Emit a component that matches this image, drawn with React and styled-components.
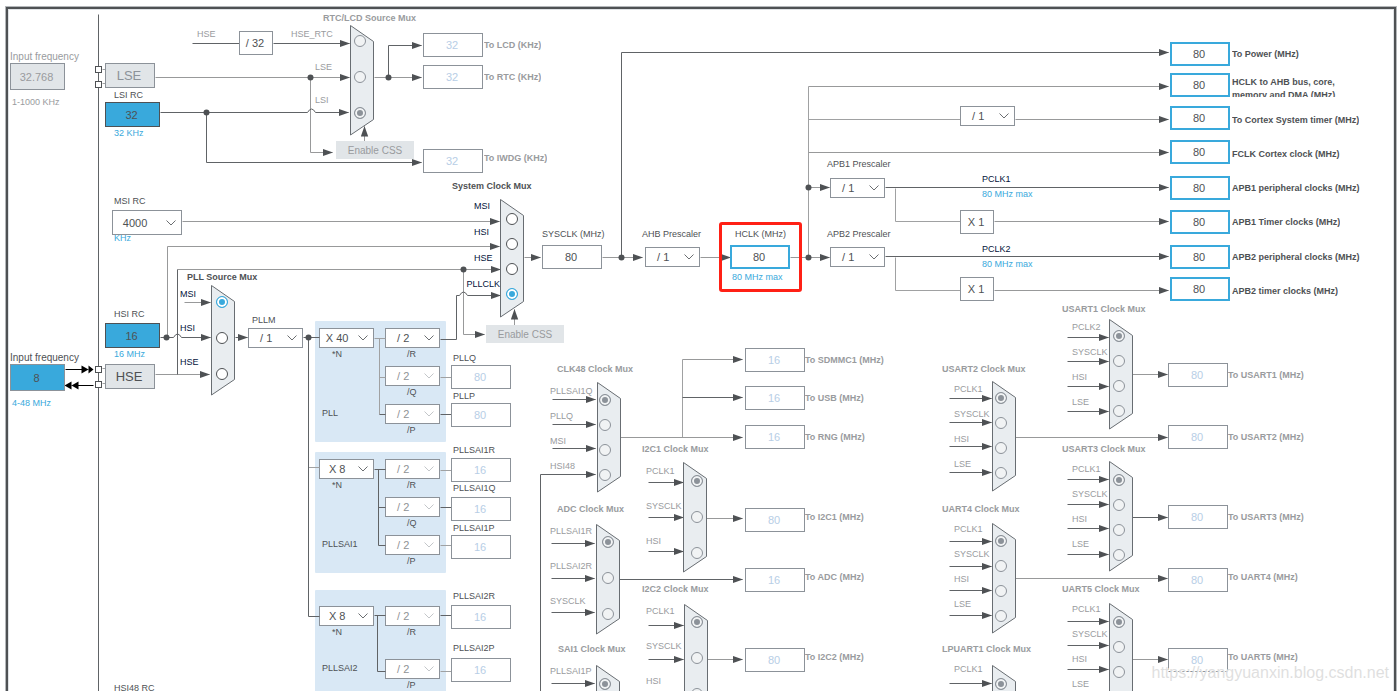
import React from 'react';
import styled, { createGlobalStyle } from 'styled-components';

const dark = '#4e5154';
const grey = '#999b9e';
const line = '#8c9299';
const blue = '#39a9dc';
const navy = '#03143a';
const pale = '#b7cee6';
const muxFill = '#e9edf0';

const GlobalStyle = createGlobalStyle`
  * {
    box-sizing: border-box;
  }
  body {
    margin: 0;
    background: white;
    font-family: "Liberation Sans", Arial, sans-serif;
  }
`;

const Page = styled.main`
  position: relative;
  height: 100vh;
  padding: 7px 3px 0 6px;
  overflow: hidden;
`;

const Frame = styled.div`
  height: 110vh;
  border: 2px solid ${dark};
  box-shadow: 0 0 0 1px #b4b7ba, inset 0 0 0 1px #dfe2e5;
`;

const Wires = styled.svg`
  position: absolute;
  top: 0;
  left: 0;
  width: 100%;
  height: 100%;
`;

// a block on the free canvas of the clock tree
const Node = styled.div`
  position: absolute;
  left: ${props => props.$x}px;
  top: ${props => props.$y}px;
  display: flex;
`;

const Text = styled.label`
  font-size: ${props => props.$size || 9}px;
  font-weight: ${props => props.$bold ? 'bold' : 'normal'};
  line-height: 13px;
  white-space: nowrap;
  color: ${props => props.$color || dark};
`;

const FieldNode = styled(Node)`
  flex-direction: column;
  align-items: flex-start;
`;

const FieldLabel = styled(Text)`
  margin: 0 0 ${props => props.$gap || 0}px ${props => props.$indent || 0}px;
`;

const FieldNote = styled(Text)`
  margin: ${props => props.$gap || 0}px 0 0 2px;
`;

const RcNote = styled(FieldNote)`
  margin-left: ${props => props.$indent}px;
`;

const SignalNode = styled(Node)`
  flex-direction: column;
  gap: 2px;
`;

const OutputNode = styled(Node)`
  align-items: ${props => props.$align || 'center'};
`;

const OutputLabel = styled(Text)`
  max-width: 140px;
  max-height: 21px;
  margin: 3px 0 3px ${props => props.$space}px;
  overflow: hidden;
  white-space: normal;
`;

const Highlight = styled(Node)`
  width: 83px;
  height: 70px;
  border: 3px solid #ff2015;
  border-radius: 3px;
  pointer-events: none;
`;

const Value = styled.input`
  width: ${props => props.$w || 60}px;
  height: ${props => props.$h || 24}px;
  padding: 0 2px 0 0;
  border: ${props => props.$active ? 2 : 1}px solid ${props => props.$active ? blue : props.$border || line};
  border-radius: 0;
  outline: none;
  background: ${props => props.$fill || 'white'};
  color: ${props => props.$color || dark};
  font: 11px "Liberation Sans", Arial, sans-serif;
  text-align: center;
`;

const Source = styled.button`
  width: 50px;
  height: 25px;
  padding: 0 2px 0 0;
  border: 1px solid ${line};
  background: #e1e5e8;
  color: ${props => props.$color};
  font: 13px "Liberation Sans", Arial, sans-serif;
`;

const CssButton = styled.button`
  width: 78px;
  height: 18px;
  padding: 0;
  border: none;
  background: #e1e5e8;
  color: ${grey};
  font: 10px "Liberation Sans", Arial, sans-serif;
`;

const SelectBox = styled.div`
  display: grid;
  width: ${props => props.$w || 55}px;
  height: ${props => props.$h || 20}px;
  align-items: center;
`;

const Select = styled.select`
  grid-area: 1 / 1;
  width: 100%;
  height: 100%;
  padding: 0 34% 0 0;
  appearance: none;
  border: 1px solid ${line};
  border-radius: 0;
  background: white;
  color: ${dark};
  font: 11px "Liberation Sans", Arial, sans-serif;
  text-align: center;
  text-align-last: center;
  &:disabled {
    color: #8f9296;
    opacity: 1;
  }
`;

const Chevron = styled.svg`
  grid-area: 1 / 1;
  justify-self: end;
  width: 12px;
  height: 8px;
  margin-right: 5px;
  fill: none;
  stroke: ${props => props.$off ? '#c3c6c9' : '#6b6e71'};
  pointer-events: none;
`;

const PanelNode = styled(Node)`
  justify-content: space-between;
  width: 131px;
  padding: ${props => props.$top}px 6px 5px 4px;
  border-radius: 1px;
  background: #d9e8f5;
`;

const PanelColumn = styled.div`
  display: flex;
  flex-direction: column;
  justify-content: space-between;
  gap: ${props => props.$gap || 0}px;
`;

const PanelName = styled(Text)`
  padding: 0 0 17px 3px;
`;

const Stage = styled.div`
  display: flex;
  flex-direction: column;
`;

const StageLabel = styled(Text)`
  margin-left: ${props => props.$indent}px;
`;

const MuxNode = styled(Node)`
  display: grid;
  grid-template-columns: ${props => props.$lane}px auto;
`;

const MuxTitle = styled(Text)`
  grid-column: 1 / 3;
  margin: 0 0 ${props => props.$gap}px ${props => props.$indent}px;
`;

const MuxLane = styled.div`
  display: flex;
  flex-direction: column;
  align-items: flex-start;
  gap: ${props => props.$step - 13}px;
  margin-top: ${props => props.$top}px;
  > :not(:first-child) {
    margin-left: ${props => props.$hang || 0}px;
  }
`;

const InputLabel = styled(Text)`
  align-self: ${props => props.$end ? 'flex-end' : 'auto'};
`;

const MuxBody = styled.div`
  display: grid;
  margin-top: ${props => props.$top}px;
`;

const MuxShape = styled.svg`
  grid-area: 1 / 1;
  fill: ${muxFill};
  stroke: #686d72;
`;

const Radios = styled.div`
  grid-area: 1 / 1;
  display: flex;
  flex-direction: column;
  gap: ${props => props.$step - 12}px;
  padding: ${props => props.$top}px 0 0 ${props => props.$left}px;
`;

const Radio = styled.input`
  flex: none;
  width: 12px;
  height: 12px;
  margin: 0;
  appearance: none;
  border: 1px solid ${props => props.$active ? dark : line};
  border-radius: 50%;
  background: ${props => props.$active ? 'white' : '#f1f3f4'};
  &:checked {
    border-color: ${props => props.$active ? blue : line};
    background: ${props => props.$active ? blue : line};
    box-shadow: inset 0 0 0 2px ${props => props.$active ? 'white' : '#f1f3f4'};
  }
`;

const Watermark = styled.div`
  position: absolute;
  right: 10px;
  bottom: 8px;
  font-size: 16px;
  line-height: 20px;
  color: #dfdfdf;
  text-shadow: 1px 1px 0 white;
`;

// [x, y, value, label, align]
const rtcOutputs = [
  [423, 33, '32', 'To LCD (KHz)'],
  [423, 65, '32', 'To RTC (KHz)'],
  [423, 149, '32', 'To IWDG (KHz)', 'start']
];

const busOutputs = [
  [1170, 42, '80', 'To Power (MHz)'],
  [1170, 73, '80', 'HCLK to AHB bus, core, memory and DMA (MHz)', 'start'],
  [1170, 106, '80', 'To Cortex System timer (MHz)', 'end'],
  [1170, 140, '80', 'FCLK Cortex clock (MHz)', 'end'],
  [1170, 176, '80', 'APB1 peripheral clocks (MHz)'],
  [1170, 210, '80', 'APB1 Timer clocks (MHz)'],
  [1170, 245, '80', 'APB2 peripheral clocks (MHz)'],
  [1170, 277, '80', 'APB2 timer clocks (MHz)', 'end']
];

const peripheralOutputs = [
  [745, 348, '16', 'To SDMMC1 (MHz)'],
  [745, 386, '16', 'To USB (MHz)'],
  [745, 425, '16', 'To RNG (MHz)'],
  [745, 508, '80', 'To I2C1 (MHz)', 'start'],
  [745, 568, '16', 'To ADC (MHz)', 'start'],
  [745, 648, '80', 'To I2C2 (MHz)', 'start'],
  [1168, 363, '80', 'To USART1 (MHz)'],
  [1168, 425, '80', 'To USART2 (MHz)'],
  [1168, 505, '80', 'To USART3 (MHz)'],
  [1168, 568, '80', 'To UART4 (MHz)', 'start'],
  [1168, 648, '80', 'To UART5 (MHz)', 'start']
];

// [label, y, gap, value]
const pllOutputs = [
  ['PLLQ', 352, 0, '80'],
  ['PLLP', 390, 0, '80'],
  ['PLLSAI1R', 444, 1, '16'],
  ['PLLSAI1Q', 482, 2, '16'],
  ['PLLSAI1P', 522, 0, '16'],
  ['PLLSAI2R', 590, 2, '16'],
  ['PLLSAI2P', 642, 3, '16']
];

const panels = [
  { name: 'PLL', x: 315, y: 321, top: 7, gap: 5, multiplier: 'X 40', stages: [['/R', false], ['/Q', true], ['/P', true]] },
  { name: 'PLLSAI1', x: 315, y: 452, top: 7, gap: 5, multiplier: 'X 8', stages: [['/R', true], ['/Q', true], ['/P', true]] },
  { name: 'PLLSAI2', x: 315, y: 590, top: 16, gap: 20, multiplier: 'X 8', stages: [['/R', true], ['/P', true]] }
];

// tx, ty: title; lx, ly: first input label; inputs are [name, wire y]
const muxes = [
  {
    id: 'rtc', title: 'RTC/LCD Source Mux', tx: 323, ty: 12, x: 350, y: 25, h: 110,
    dotX: 360, dotY: 41, step: 36, lx: 291, ly: 28, labelStep: 33, hang: 24, checked: 2,
    inputs: [['HSE_RTC'], ['LSE'], ['LSI']]
  },
  {
    id: 'sys', title: 'System Clock Mux', tx: 452, ty: 180, x: 500, y: 199, h: 118,
    dotX: 512, dotY: 219, step: 25, lx: 474, ly: 200, labelStep: 26, checked: 3, active: true,
    inputs: [['MSI'], ['HSI'], ['HSE'], ['PLLCLK']]
  },
  {
    id: 'pll', title: 'PLL Source Mux', tx: 187, ty: 271, x: 211, y: 285, h: 110,
    dotX: 222, dotY: 302, step: 36, lx: 180, ly: 288, labelStep: 34, checked: 0, active: true,
    inputs: [['MSI'], ['HSI'], ['HSE']]
  },
  {
    id: 'clk48', title: 'CLK48 Clock Mux', tx: 557, ty: 363, x: 597, y: 382, h: 110,
    dotX: 605, dotY: 400, step: 25, lx: 550, ly: 385, labelStep: 25, wireX: 552, wireEnd: 595,
    inputs: [['PLLSAI1Q', 399], ['PLLQ', 424], ['MSI', 448], ['HSI48']]
  },
  {
    id: 'adc', title: 'ADC Clock Mux', tx: 557, ty: 503, x: 596, y: 524, h: 110,
    dotX: 608, dotY: 542, step: 36, lx: 550, ly: 525, labelStep: 35, wireX: 551, wireEnd: 594,
    inputs: [['PLLSAI1R', 543], ['PLLSAI2R', 578], ['SYSCLK', 612]]
  },
  {
    id: 'sai1', title: 'SAI1 Clock Mux', tx: 558, ty: 643, x: 596, y: 665, h: 110,
    dotX: 605, dotY: 684, step: 25, lx: 550, ly: 665, labelStep: 25, wireX: 551, wireEnd: 594,
    inputs: [['PLLSAI1P', 683]]
  },
  {
    id: 'i2c1', title: 'I2C1 Clock Mux', tx: 642, ty: 443, x: 683, y: 462, h: 110,
    dotX: 697, dotY: 481, step: 36, lx: 646, ly: 465, labelStep: 35, wireX: 648, wireEnd: 683,
    inputs: [['PCLK1', 482], ['SYSCLK', 517], ['HSI', 551]]
  },
  {
    id: 'i2c2', title: 'I2C2 Clock Mux', tx: 642, ty: 583, x: 684, y: 604, h: 110,
    dotX: 697, dotY: 622, step: 36, lx: 646, ly: 605, labelStep: 35, wireX: 648, wireEnd: 683,
    inputs: [['PCLK1', 625], ['SYSCLK', 659], ['HSI', 694]]
  },
  {
    id: 'usart2', title: 'USART2 Clock Mux', tx: 942, ty: 363, x: 992, y: 381, h: 110,
    dotX: 1001, dotY: 398, step: 25, lx: 954, ly: 383, labelStep: 25, wireX: 949, wireEnd: 991,
    inputs: [['PCLK1', 398], ['SYSCLK', 422], ['HSI', 446], ['LSE', 472]]
  },
  {
    id: 'uart4', title: 'UART4 Clock Mux', tx: 942, ty: 503, x: 992, y: 523, h: 110,
    dotX: 1001, dotY: 541, step: 25, lx: 954, ly: 523, labelStep: 25, wireX: 949, wireEnd: 991,
    inputs: [['PCLK1', 541], ['SYSCLK', 566], ['HSI', 590], ['LSE', 615]]
  },
  {
    id: 'lpuart1', title: 'LPUART1 Clock Mux', tx: 942, ty: 643, x: 992, y: 665, h: 110,
    dotX: 1001, dotY: 684, step: 25, lx: 954, ly: 663, labelStep: 25, wireX: 949, wireEnd: 991,
    inputs: [['PCLK1', 683], ['SYSCLK', 708]]
  },
  {
    id: 'usart1', title: 'USART1 Clock Mux', tx: 1062, ty: 303, x: 1109, y: 319, h: 110,
    dotX: 1119, dotY: 336, step: 25, lx: 1072, ly: 321, labelStep: 25, wireX: 1067, wireEnd: 1108,
    inputs: [['PCLK2', 337], ['SYSCLK', 361], ['HSI', 386], ['LSE', 411]]
  },
  {
    id: 'usart3', title: 'USART3 Clock Mux', tx: 1062, ty: 443, x: 1109, y: 461, h: 110,
    dotX: 1119, dotY: 480, step: 25, lx: 1072, ly: 463, labelStep: 25, wireX: 1067, wireEnd: 1108,
    inputs: [['PCLK1', 479], ['SYSCLK', 504], ['HSI', 528], ['LSE', 554]]
  },
  {
    id: 'uart5', title: 'UART5 Clock Mux', tx: 1062, ty: 583, x: 1109, y: 603, h: 110,
    dotX: 1119, dotY: 622, step: 25, lx: 1072, ly: 603, labelStep: 25, wireX: 1067, wireEnd: 1108,
    inputs: [['PCLK1', 621], ['SYSCLK', 645], ['HSI', 669], ['LSE', 694]]
  }
];

// wires without an arrow
const plainWires = [
  'M98 14V800', 'M192 43H239', 'M206 112V162', 'M177 269V374',
  'M308 337V616H319', 'M303 337H319', 'M621 257V52',
  'M379 414H385', 'M440 414H451',
  'M374 469H385', 'M378 469V545H385', 'M378 507H385', 'M440 507H451',
  'M374 615H385', 'M377 615V671H385', 'M440 615H451'
];

const softWires = [
  'M102 69H105', 'M102 83H105', 'M102 368H105', 'M102 383H105',
  'M308 467H319', 'M374 338H385', 'M379 338V414', 'M379 377H385', 'M440 377H451',
  'M440 470H451', 'M440 545H451', 'M440 671H451',
  'M808 86V257', 'M808 119H960', 'M895 188V221H960', 'M895 257V290H960',
  'M682 359V437'
];

const arrowWires = [
  'M273 43H349',
  'M160 112H307Q311 105 315 112H348',
  'M206 162H421',
  'M388 77V45H421',
  'M160 337H173Q177 330 181 337H210',
  'M235 337H247',
  'M440 339H456V295H459Q463 288 467 295H500',
  'M621 52H1168',
  'M885 187H1168', 'M885 256H1168',
  'M682 397H742',
  'M540 800V474H595',
  'M619 579H742',
  'M1132 517H1167'
];

const softArrowWires = [
  'M155 77H349', 'M310 78V152H332', 'M374 77H421',
  'M364 141V126', 'M514 325V309',
  'M182 221H499', 'M167 337V246H499', 'M177 269H500', 'M463 270V334H484',
  'M155 374H209', 'M184 302H210',
  'M524 257H540', 'M602 257H642', 'M700 257H730', 'M790 257H829',
  'M808 187H829', 'M808 86H1168', 'M1015 119H1168', 'M808 152H1168',
  'M994 221H1168', 'M994 290H1168',
  'M620 437H742', 'M682 359H742', 'M706 518H742', 'M707 659H742',
  'M1015 437H1167', 'M1132 374H1167', 'M1015 578H1167', 'M1132 659H1167'
];

const dots = [
  [310, 77], [206, 112], [388, 77], [166, 337], [463, 269], [308, 337], [621, 257], [808, 257], [808, 187]
];

const pins = [[95, 66], [95, 81], [95, 366], [95, 381]];

const Diagram = () => (
  <Wires aria-hidden="true">
    <defs>
      <marker id="head" markerUnits="userSpaceOnUse" markerWidth="11" markerHeight="8" refX="10" refY="4" orient="auto">
        <path d="M0 0.3L10.5 4L0 7.7Z" fill={dark} />
      </marker>
    </defs>
    <g transform="translate(.5 .5)" fill="none">
      {softWires.map(d => <path key={d} d={d} stroke="#a0a1a2" />)}
      {softArrowWires.map(d => <path key={d} d={d} stroke="#98999a" markerEnd="url(#head)" />)}
      {plainWires.map(d => <path key={d} d={d} stroke="#606366" />)}
      {arrowWires.map(d => <path key={d} d={d} stroke="#606366" markerEnd="url(#head)" />)}
      {muxes.map(mux => mux.inputs.filter(input => input[1]).map(([name, y]) => (
        <path key={mux.id + name} d={`M${mux.wireX} ${y}H${mux.wireEnd}`} stroke="#606366" markerEnd="url(#head)" />
      )))}
      {dots.map(([x, y]) => <circle key={`${x}-${y}`} cx={x} cy={y} r="3" fill={dark} />)}
      {pins.map(([x, y]) => <rect key={y} x={x} y={y} width="6" height="6" fill="white" stroke={dark} />)}
      <path d="M65 369H82M93 385H77" stroke="black" />
      <path d="M81 365L88 369L81 373ZM88 365L93 369L88 373ZM78 381L71 385L78 389ZM71 381L64 385L71 389Z" fill="black" />
    </g>
  </Wires>
);

const Dropdown = ({ w, h, id, value, label, disabled }) => (
  <SelectBox $w={w} $h={h}>
    <Select id={id} aria-label={label} defaultValue={value} disabled={disabled}>
      <option>{value}</option>
    </Select>
    <Chevron $off={disabled} viewBox="0 0 12 8"><path d="M1.500 1.500L6 6L10.500 1.500" /></Chevron>
  </SelectBox>
);

const Field = ({ x, y, id, label, size, color, indent, gap, note, noteGap, noteColor, children }) => (
  <FieldNode $x={x} $y={y}>
    <FieldLabel htmlFor={id} $size={size} $color={color} $indent={indent} $gap={gap}>{label}</FieldLabel>
    {children}
    {note ? <FieldNote as="span" $gap={noteGap} $color={noteColor || blue}>{note}</FieldNote> : null}
  </FieldNode>
);

const RcField = ({ x, y, id, label, indent, gap, note, noteGap, children }) => (
  <FieldNode $x={x} $y={y}>
    <FieldLabel htmlFor={id} $indent={indent} $gap={gap}>{label}</FieldLabel>
    {children}
    <RcNote as="span" $indent={indent} $gap={noteGap} $color={blue}>{note}</RcNote>
  </FieldNode>
);

const Panel = ({ panel }) => (
  <PanelNode $x={panel.x} $y={panel.y} $top={panel.top}>
    <PanelColumn>
      <Stage>
        <Dropdown id={`${panel.name}-N`} value={panel.multiplier} />
        <StageLabel htmlFor={`${panel.name}-N`} $indent={13}>*N</StageLabel>
      </Stage>
      <PanelName as="span">{panel.name}</PanelName>
    </PanelColumn>
    <PanelColumn $gap={panel.gap}>
      {panel.stages.map(([name, disabled]) => (
        <Stage key={name}>
          <Dropdown id={panel.name + name} value="/ 2" disabled={disabled} />
          <StageLabel htmlFor={panel.name + name} $indent={22}>{name}</StageLabel>
        </Stage>
      ))}
    </PanelColumn>
  </PanelNode>
);

class Mux extends React.Component {
  constructor(props) {
    super(props);
    this.state = {
      selected: props.mux.checked || 0
    };
  }

  handleSelect(index) {
    this.setState({ selected: index });
  }

  render() {
    const { mux } = this.props;
    const titleId = `${mux.id}-title`;
    const rowTop = Math.min(mux.y, mux.ly);
    return (
      <MuxNode role="radiogroup" aria-labelledby={titleId} $x={mux.lx} $y={mux.ty} $lane={mux.x - mux.lx}>
        <MuxTitle
          as="span"
          id={titleId}
          $bold
          $indent={mux.tx - mux.lx}
          $gap={rowTop - mux.ty - 13}
          $color={mux.active ? dark : grey}
        >
          {mux.title}
        </MuxTitle>
        <MuxLane $top={mux.ly - rowTop} $step={mux.labelStep} $hang={mux.hang}>
          {mux.inputs.map(([name], i) => (
            <InputLabel key={name} htmlFor={`${mux.id}-${i}`} $end={name === 'PLLCLK'} $color={mux.active ? navy : grey}>
              {name}
            </InputLabel>
          ))}
        </MuxLane>
        <MuxBody $top={mux.y - rowTop}>
          <MuxShape width="25" height={mux.h + 1}>
            <path d={`M.5 .5L23.500 16.500V${mux.h - 15.5}L.5 ${mux.h}Z`} />
          </MuxShape>
          <Radios $step={mux.step} $top={mux.dotY - mux.y - 6} $left={mux.dotX - mux.x - 6}>
            {mux.inputs.map(([name], i) => (
              <Radio
                key={name}
                type="radio"
                id={`${mux.id}-${i}`}
                name={mux.id}
                $active={mux.active}
                checked={this.state.selected === i}
                onChange={() => this.handleSelect(i)}
              />
            ))}
          </Radios>
        </MuxBody>
      </MuxNode>
    );
  }
}

const Output = ({ output: [x, y, value, label, align], active, space }) => {
  const id = `out-${x}-${y}`;
  return (
    <OutputNode $x={x} $y={y} $align={align}>
      <Value id={id} readOnly value={value} $active={active} $color={active ? dark : pale} />
      <OutputLabel htmlFor={id} $bold $space={space} $color={active ? dark : grey}>{label}</OutputLabel>
    </OutputNode>
  );
};

const Signal = ({ y, name }) => (
  <SignalNode $x={982} $y={y}>
    <Text as="span" $color={navy}>{name}</Text>
    <Text as="span" $color={blue}>80 MHz max</Text>
  </SignalNode>
);

const App = () => (
  <Page>
    <GlobalStyle />
    <Frame />
    {panels.map(panel => <Panel key={panel.name} panel={panel} />)}
    <Diagram />

    <Field x={10} y={50} id="lse-in" label="Input frequency" size={10} color={grey} note="1-1000 KHz" noteGap={6} noteColor={grey}>
      <Value id="lse-in" defaultValue="32.768" $w={55} $h={27} $fill="#e1e5e8" $color={grey} />
    </Field>
    <Field x={10} y={351} id="hse-in" label="Input frequency" size={10} note="4-48 MHz" noteGap={6}>
      <Value id="hse-in" defaultValue="8" $w={55} $h={27} $fill={blue} />
    </Field>

    <Node $x={105} $y={63}><Source $color={line}>LSE</Source></Node>
    <Node $x={105} $y={364}><Source $color={dark}>HSE</Source></Node>
    <RcField x={105} y={89} id="lsi" label="LSI RC" indent={9} note="32 KHz">
      <Value id="lsi" readOnly value="32" $w={55} $h={25} $fill={blue} $border={dark} />
    </RcField>
    <RcField x={112} y={195} id="msi" label="MSI RC" indent={2} gap={2} note="KHz" noteGap={-3}>
      <Dropdown id="msi" w={70} h={25} value="4000" />
    </RcField>
    <RcField x={105} y={308} id="hsi" label="HSI RC" indent={9} gap={2} note="16 MHz">
      <Value id="hsi" readOnly value="16" $w={55} $h={25} $fill={blue} $border={dark} />
    </RcField>
    <Node $x={114} $y={682}><Text as="span">HSI48 RC</Text></Node>

    <Node $x={197} $y={28}><Text htmlFor="rtc-div" $color={grey}>HSE</Text></Node>
    <Node $x={239} $y={31}><Value id="rtc-div" readOnly value="/ 32" $w={34} /></Node>
    <Node $x={336} $y={141}><CssButton>Enable CSS</CssButton></Node>
    <Node $x={486} $y={325}><CssButton>Enable CSS</CssButton></Node>

    <Field x={248} y={314} id="pllm" label="PLLM" indent={4} gap={1}>
      <Dropdown id="pllm" value="/ 1" />
    </Field>
    {pllOutputs.map(([label, y, gap, value]) => (
      <Field key={label} x={451} y={y} id={label} label={label} indent={2} gap={gap}>
        <Value id={label} readOnly value={value} $color={pale} />
      </Field>
    ))}

    <Field x={542} y={228} id="sysclk" label="SYSCLK (MHz)" gap={4}>
      <Value id="sysclk" readOnly value="80" />
    </Field>
    <Field x={645} y={228} id="ahb" label="AHB Prescaler" indent={-3} gap={6}>
      <Dropdown id="ahb" value="/ 1" />
    </Field>
    <Field x={730} y={228} id="hclk" label="HCLK (MHz)" indent={5} gap={4} note="80 MHz max" noteGap={2}>
      <Value id="hclk" defaultValue="80" $active />
    </Field>
    <Highlight $x={719} $y={222} />

    <Node $x={960} $y={106}><Dropdown label="Cortex timer prescaler" value="/ 1" /></Node>
    <Field x={830} y={158} id="apb1" label="APB1 Prescaler" indent={-3} gap={7}>
      <Dropdown id="apb1" value="/ 1" />
    </Field>
    <Field x={830} y={228} id="apb2" label="APB2 Prescaler" indent={-3} gap={6}>
      <Dropdown id="apb2" value="/ 1" />
    </Field>
    <Signal y={173} name="PCLK1" />
    <Node $x={960} $y={210}><Value aria-label="APB1 timer multiplier" readOnly value="X 1" $w={34} /></Node>
    <Signal y={243} name="PCLK2" />
    <Node $x={960} $y={277}><Value aria-label="APB2 timer multiplier" readOnly value="X 1" $w={34} /></Node>

    {rtcOutputs.map(output => <Output key={output[3]} output={output} space={1} />)}
    {busOutputs.map(output => <Output key={output[3]} output={output} space={2} active />)}
    {peripheralOutputs.map(output => <Output key={output[3]} output={output} space={0} />)}
    {muxes.map(mux => <Mux key={mux.id} mux={mux} />)}
    <Watermark>https://yangyuanxin.blog.csdn.net</Watermark>
  </Page>
);

export default App;
